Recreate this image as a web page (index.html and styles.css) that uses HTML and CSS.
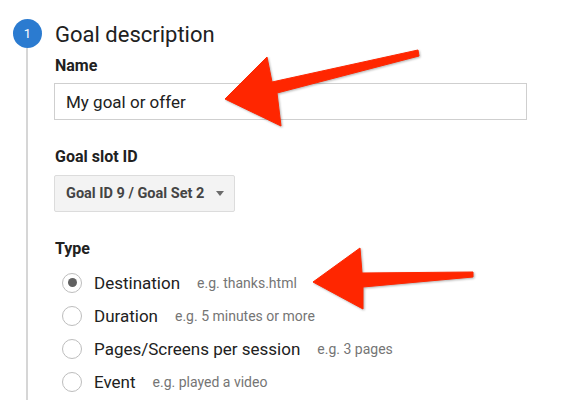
FILE: index.html
```html
<!DOCTYPE html>
<html lang="en">
  <head>
    <meta charset="UTF-8" />
    <title>Goal description</title>
    <link rel="stylesheet" href="styles.css">
  </head>
  <body>
    <div class="step">
      <div class="rail">
        <div class="step-num">1</div>
        <div class="rail-line"></div>
      </div>
      <div class="step-body">
        <h1>Goal description</h1>

        <label class="field-label" for="name">Name</label>
        <input type="text" id="name" class="text-input" value="My goal or offer" />

        <div class="field-label gap">Goal slot ID</div>
        <button class="select-btn" type="button">
          Goal ID 9 / Goal Set 2
          <span class="caret"></span>
        </button>

        <div class="field-label gap">Type</div>
        <div class="radio-list">
          <div class="radio-row">
            <span class="radio checked"></span>
            <span class="radio-label">Destination</span>
            <span class="hint">e.g. thanks.html</span>
          </div>
          <div class="radio-row">
            <span class="radio"></span>
            <span class="radio-label">Duration</span>
            <span class="hint">e.g. 5 minutes or more</span>
          </div>
          <div class="radio-row">
            <span class="radio"></span>
            <span class="radio-label">Pages/Screens per session</span>
            <span class="hint">e.g. 3 pages</span>
          </div>
          <div class="radio-row">
            <span class="radio"></span>
            <span class="radio-label">Event</span>
            <span class="hint">e.g. played a video</span>
          </div>
        </div>
      </div>
    </div>

    <!-- annotation arrows -->
    <svg class="arrows" width="575" height="400" viewBox="0 0 575 400">
      <polygon points="225,99 267,57 272,82 418,50 419,56 277,93 281,126" />
      <polygon points="313,282 360,248 362,273 473,272 473,277 363,287 363,309" />
    </svg>
  </body>
</html>
```

FILE: styles.css
```css
body {
  margin: 0;
  font-family: Roboto, "Liberation Sans", Arial, sans-serif;
  color: #212121;
  background: #fff;
  height: 400px;
  overflow: hidden;
}
.step {
  display: grid;
  grid-template-columns: 54px 1fr;
  min-height: 400px;
}
.rail {
  display: flex;
  flex-direction: column;
  padding-top: 19px;
}
.step-num {
  width: 29px;
  height: 29px;
  margin-left: 13px;
  border-radius: 50%;
  background: #2b7bd0;
  color: #fff;
  font-size: 13px;
  line-height: 29px;
  text-align: center;
}
.rail-line {
  flex: 1;
  width: 2px;
  margin-left: 26px;
  background: #d6d6d6;
}
.step-body {
  padding-top: 22px;
  display: flex;
  flex-direction: column;
  align-items: flex-start;
}
h1 {
  margin: 0 0 0 1px;
  font-size: 22px;
  line-height: 26px;
  font-weight: normal;
}
.field-label {
  display: block;
  margin: 8px 0 0 1px;
  font-size: 16px;
  line-height: 20px;
  font-weight: bold;
}
.field-label.gap {
  margin-top: 27px;
}
.text-input {
  margin-top: 7px;
  width: 473px;
  height: 37px;
  box-sizing: border-box;
  border: 1px solid #cfcfcf;
  padding: 0 11px;
  font-family: inherit;
  font-size: 17px;
  color: #212121;
  line-height: 35px;
}
.select-btn {
  margin-top: 8px;
  height: 37px;
  width: 181px;
  box-sizing: border-box;
  display: flex;
  align-items: center;
  justify-content: space-between;
  padding: 0 10px 0 11px;
  background: #f3f3f3;
  border: 1px solid #dcdcdc;
  border-radius: 2px;
  font-family: inherit;
  font-size: 14.5px;
  font-weight: bold;
  color: #444;
}
.caret {
  width: 0;
  height: 0;
  border-left: 4.5px solid transparent;
  border-right: 4.5px solid transparent;
  border-top: 5px solid #6b6b6b;
}
.radio-list {
  margin-top: 7px;
}
.radio-row {
  display: flex;
  align-items: center;
  height: 33px;
}
.radio {
  width: 20px;
  height: 20px;
  box-sizing: border-box;
  margin-left: 8px;
  border: 1.5px solid #bdbdbd;
  border-radius: 50%;
  display: flex;
  align-items: center;
  justify-content: center;
}
.radio.checked::after {
  content: "";
  width: 9px;
  height: 9px;
  border-radius: 50%;
  background: #616161;
}
.radio-label {
  margin-left: 12px;
  font-size: 17px;
}
.hint {
  margin-left: 17px;
  font-size: 14px;
  color: #757575;
}
.arrows {
  position: absolute;
  top: 0;
  left: 0;
  pointer-events: none;
  filter: drop-shadow(1px 1px 1px rgba(0, 0, 0, 0.3));
}
.arrows polygon {
  fill: #ff2600;
  stroke: #ff2600;
  stroke-width: 1;
  stroke-linejoin: round;
}
```
